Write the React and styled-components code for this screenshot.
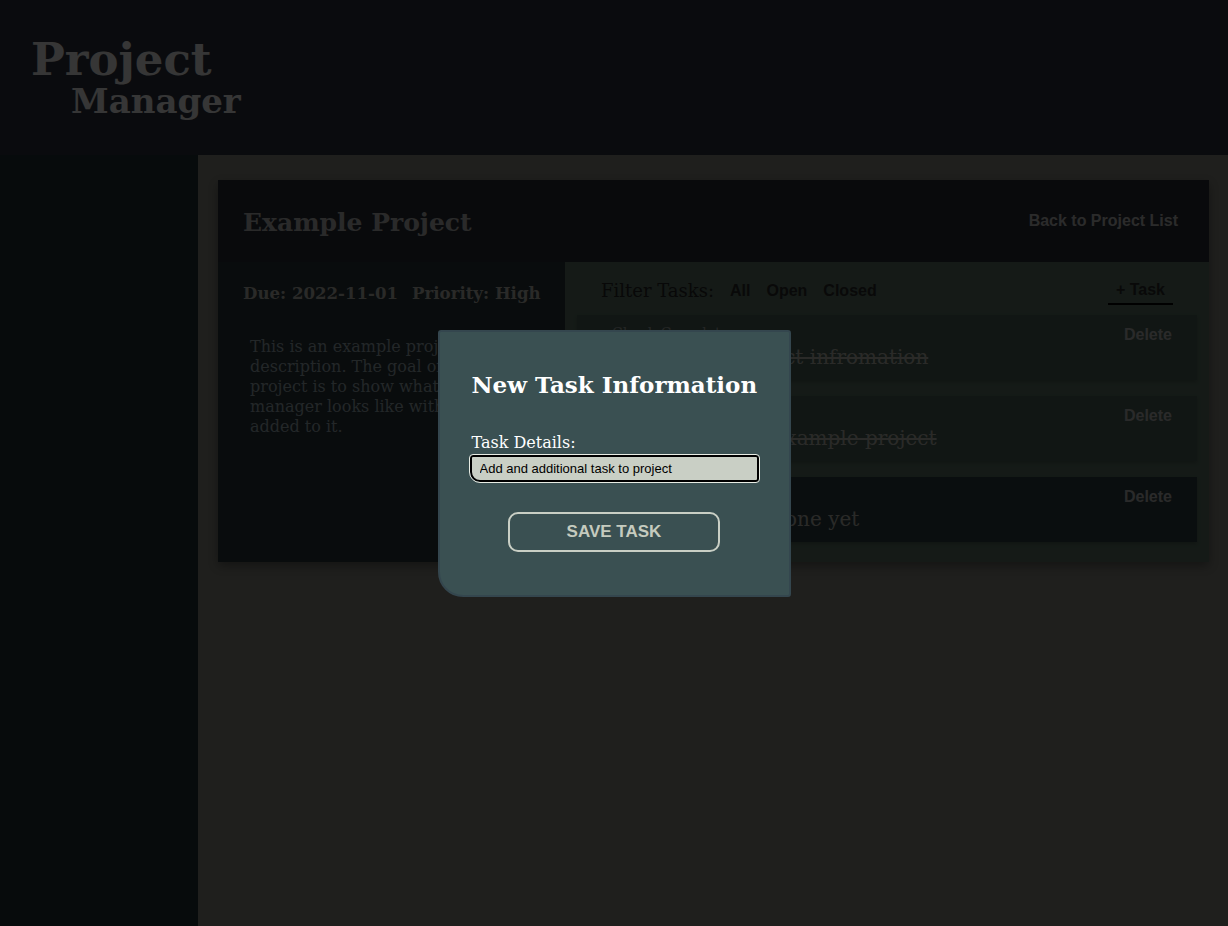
import React from 'react';
import styled, { createGlobalStyle } from 'styled-components';

const GlobalStyle = createGlobalStyle`
  html, body {
    margin: 0;
    padding: 0;
    height: 100%;
  }
  body {
    background: #8d8d84;
    font-family: "DejaVu Serif", serif;
    overflow: hidden;
  }
`;

const tasks = [
    { id: 1, title: 'Check Complete', description: 'Update the project infromation', done: true },
    { id: 2, title: 'Check Complete', description: 'Create the first example project', done: true },
    { id: 3, title: 'Check Complete', description: 'This task is not done yet', done: false }
];

export default function App() {
    return (
        <>
            <GlobalStyle />
            <Page>
                <Header>
                    <Logo>
                        <span>Project</span>
                        <span>Manager</span>
                    </Logo>
                </Header>
                <Content>
                    <Sidebar />
                    <Main>
                        <ProjectCard>
                            <ProjectHeader>
                                <h1>Example Project</h1>
                                <LinkButton href="#">Back to Project List</LinkButton>
                            </ProjectHeader>
                            <ProjectBody>
                                <InfoPanel>
                                    <Meta>
                                        <span>Due: 2022-11-01</span>
                                        <span>Priority: High</span>
                                    </Meta>
                                    <Description>
                                        This is an example project description. The goal of this
                                        project is to show what the manager looks like with tasks
                                        added to it.
                                    </Description>
                                </InfoPanel>
                                <TaskPanel>
                                    <FilterRow>
                                        <FilterLabel>Filter Tasks:</FilterLabel>
                                        <FilterButton>All</FilterButton>
                                        <FilterButton>Open</FilterButton>
                                        <FilterButton>Closed</FilterButton>
                                        <AddTask>+ Task</AddTask>
                                    </FilterRow>
                                    {tasks.map(task => (
                                        <TaskCard key={task.id} $done={task.done}>
                                            <TaskText>
                                                <TaskTitle>{task.title}</TaskTitle>
                                                <TaskDesc $done={task.done}>{task.description}</TaskDesc>
                                            </TaskText>
                                            <DeleteButton>Delete</DeleteButton>
                                        </TaskCard>
                                    ))}
                                </TaskPanel>
                            </ProjectBody>
                        </ProjectCard>
                    </Main>
                </Content>
            </Page>
            <Overlay>
                <Modal>
                    <h2>New Task Information</h2>
                    <Field>
                        <label htmlFor="details">Task Details:</label>
                        <TextInput id="details" defaultValue="Add and additional task to project" />
                    </Field>
                    <SaveButton>Save Task</SaveButton>
                </Modal>
            </Overlay>
        </>
    );
}

const Page = styled.div`
    display: flex;
    flex-direction: column;
    height: 100vh;
`;

const Header = styled.header`
    height: 155px;
    flex-shrink: 0;
    background: #2d3240;
    display: flex;
    align-items: flex-start;
`;

const Logo = styled.div`
    display: flex;
    flex-direction: column;
    padding: 35px 0 0 31px;
    color: #f4f4f4;
    font-weight: bold;
    span:first-child {
        font-size: 45px;
        line-height: 50px;
    }
    span:last-child {
        font-size: 34px;
        line-height: 40px;
        padding-left: 40px;
        margin-top: -4px;
    }
`;

const Content = styled.div`
    flex: 1;
    display: flex;
`;

const Sidebar = styled.aside`
    width: 198px;
    flex-shrink: 0;
    background: #203236;
`;

const Main = styled.main`
    flex: 1;
    padding: 25px 19px 0 20px;
`;

const ProjectCard = styled.section`
    display: flex;
    flex-direction: column;
    box-shadow: 0 4px 10px rgba(0, 0, 0, 0.35);
`;

const ProjectHeader = styled.div`
    height: 82px;
    display: flex;
    align-items: center;
    justify-content: space-between;
    padding: 0 31px 0 25px;
    background: #292e37;
    h1 {
        margin: 0;
        font-size: 25px;
        color: #c0c0c0;
        padding-top: 2px;
    }
`;

const LinkButton = styled.a`
    font-family: "Liberation Sans", Arial, sans-serif;
    font-weight: bold;
    font-size: 16px;
    color: #c4c4c4;
    text-decoration: none;
`;

const ProjectBody = styled.div`
    display: flex;
    height: 300px;
`;

const InfoPanel = styled.div`
    width: 347px;
    flex-shrink: 0;
    background: #29373b;
    padding: 21px 20px 0 25px;
    box-sizing: border-box;
`;

const Meta = styled.div`
    display: flex;
    gap: 14px;
    font-weight: bold;
    font-size: 16.6px;
    color: #bdbdb6;
    white-space: nowrap;
`;

const Description = styled.p`
    margin: 34px 0 0 7px;
    font-size: 16px;
    line-height: 20px;
    color: #a0b0b8;
    width: 268px;
`;

const TaskPanel = styled.div`
    flex: 1;
    background: #5f7869;
    padding: 0 12px;
`;

const FilterRow = styled.div`
    display: flex;
    align-items: center;
    gap: 16px;
    height: 53px;
    padding: 4px 24px 0;
    box-sizing: border-box;
`;

const FilterLabel = styled.span`
    font-size: 18px;
    color: #262626;
`;

const FilterButton = styled.button`
    background: none;
    border: none;
    padding: 0;
    font-family: "Liberation Sans", Arial, sans-serif;
    font-weight: bold;
    font-size: 16px;
    color: #2a2a2a;
`;

const AddTask = styled(FilterButton)`
    margin-left: auto;
    padding: 0 8px 4px;
    border-bottom: 2px solid #000;
    margin-top: 4px;
`;

const TaskCard = styled.div`
    height: 65px;
    margin-bottom: 16px;
    display: flex;
    justify-content: space-between;
    padding: 10px 25px 0 35px;
    box-sizing: border-box;
    background: ${props => (props.$done ? '#4d645b' : '#2e4045')};
    box-shadow: 0 2px 4px rgba(0, 0, 0, 0.2);
`;

const TaskText = styled.div`
    display: flex;
    flex-direction: column;
`;

const TaskTitle = styled.span`
    font-size: 14px;
    color: #a8b0ac;
`;

const TaskDesc = styled.span`
    font-size: 20px;
    margin-top: 4px;
    color: #c0c0b8;
    text-decoration: ${props => (props.$done ? 'line-through' : 'none')};
`;

const DeleteButton = styled(FilterButton)`
    align-self: flex-start;
    margin-top: 1px;
    color: #c0c0c0;
`;

const Overlay = styled.div`
    position: fixed;
    inset: 0;
    background: rgba(0, 0, 0, 0.78);
    display: flex;
    align-items: center;
    justify-content: center;
`;

const Modal = styled.div`
    width: 353px;
    height: 267px;
    box-sizing: border-box;
    background: #3a5052;
    border: 2px solid #34464e;
    border-radius: 3px 3px 3px 25px;
    padding: 39px 30px 0 32px;
    display: flex;
    flex-direction: column;
    h2 {
        margin: 0;
        font-size: 23px;
        color: #ffffff;
        white-space: nowrap;
    }
`;

const Field = styled.div`
    display: flex;
    flex-direction: column;
    margin-top: 35px;
    label {
        font-size: 16px;
        color: #ffffff;
        margin-bottom: 3px;
    }
`;

const TextInput = styled.input`
    width: 289px;
    height: 27px;
    box-sizing: border-box;
    margin-left: -2px;
    padding: 0 8px;
    background: #c9cfc5;
    border: 2px solid #000;
    border-radius: 3px 3px 3px 10px;
    outline: 1px solid #e8ece4;
    font-family: "Liberation Sans", Arial, sans-serif;
    font-size: 13px;
    color: #000;
`;

const SaveButton = styled.button`
    align-self: center;
    margin-top: 30px;
    margin-right: 2px;
    width: 212px;
    height: 40px;
    background: transparent;
    border: 2px solid #c9cfc5;
    border-radius: 10px;
    font-family: "Liberation Sans", Arial, sans-serif;
    font-weight: bold;
    font-size: 17px;
    text-transform: uppercase;
    color: #c5cbbf;
`;
